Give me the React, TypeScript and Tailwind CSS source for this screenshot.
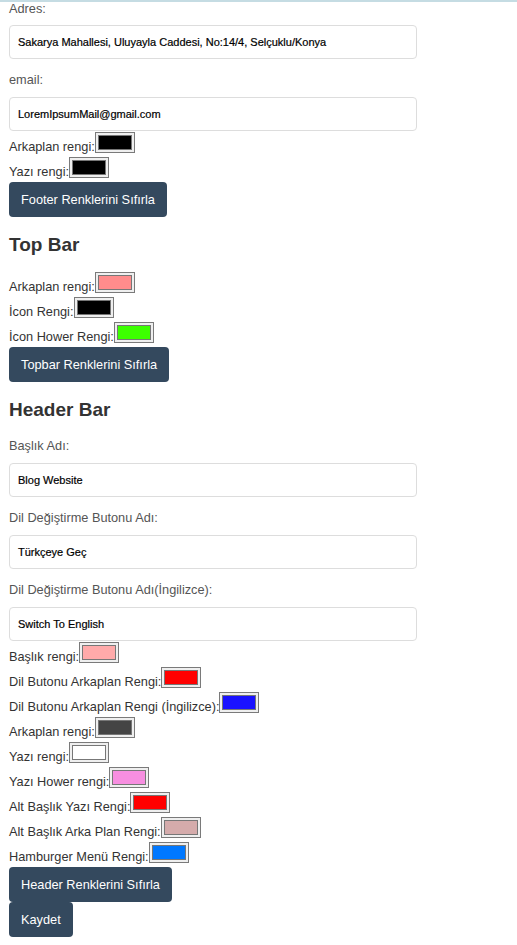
import React from 'react';

type ColorRow = { label: string; color: string };

const footerRows: ColorRow[] = [
  { label: 'Arkaplan rengi:', color: '#000000' },
  { label: 'Yazı rengi:', color: '#000000' },
];

const topBarRows: ColorRow[] = [
  { label: 'Arkaplan rengi:', color: '#ff8c8c' },
  { label: 'İcon Rengi:', color: '#000000' },
  { label: 'İcon Hower Rengi:', color: '#3cff00' },
];

const headerRows: ColorRow[] = [
  { label: 'Başlık rengi:', color: '#ffaaaa' },
  { label: 'Dil Butonu Arkaplan Rengi:', color: '#ff0000' },
  { label: 'Dil Butonu Arkaplan Rengi (İngilizce):', color: '#1a12ff' },
  { label: 'Arkaplan rengi:', color: '#444444' },
  { label: 'Yazı rengi:', color: '#ffffff' },
  { label: 'Yazı Hower rengi:', color: '#f78ee0' },
  { label: 'Alt Başlık Yazı Rengi:', color: '#ff0000' },
  { label: 'Alt Başlık Arka Plan Rengi:', color: '#d5abab' },
  { label: 'Hamburger Menü Rengi:', color: '#0078ff' },
];

const Field = ({ label, value, last, first }: { label: string; value: string; last?: boolean; first?: boolean }) => (
  <div className={last ? '' : 'mb-[12px]'}>
    <label className={`block text-[12.75px] text-[#555] mb-[8px] ${first ? 'leading-[17px]' : 'leading-[18px]'}`}>
      {label}
    </label>
    <div className="w-[408px] h-[34px] border border-[#dddddd] rounded-[4px] px-[8px] flex items-center text-[11px] text-black [-webkit-text-stroke:0.2px_#000]">
      {value}
    </div>
  </div>
);

const Swatch = ({ color }: { color: string }) => (
  <span className="self-start mt-[1px] w-[40px] h-[21px] border border-[#7a7a7a] bg-[#efefef] px-[2px] py-[2px] flex">
    <span className="flex-1 border border-[#777777]" style={{ backgroundColor: color }} />
  </span>
);

const Rows = ({ rows }: { rows: ColorRow[] }) => (
  <div>
    {rows.map((r, i) => (
      <div key={i} className="flex items-end h-[25px]">
        <span className="text-[12.75px] leading-[18px] text-[#333]">{r.label}</span>
        <Swatch color={r.color} />
      </div>
    ))}
  </div>
);

const Btn = ({ children, className = '' }: { children: React.ReactNode; className?: string }) => (
  <div className={`w-fit h-[35px] px-[12px] rounded-[4px] bg-[#34495e] text-white text-[12.75px] flex items-center ${className}`}>
    {children}
  </div>
);

const Heading = ({ children, className = 'mb-[16px]' }: { children: React.ReactNode; className?: string }) => (
  <h3 className={`mt-[18px] text-[19px] leading-[20px] font-bold text-[#333] ${className}`}>{children}</h3>
);

export default function App() {
  return (
    <div
      className="relative w-[517px] h-[945px] bg-white overflow-hidden"
      style={{ fontFamily: '"Liberation Sans", Arial, sans-serif' }}
    >
      <div className="absolute top-0 left-0 right-0 h-[2px] bg-[#c5dce3]" />
      <div className="pl-[9px]">
        <Field first label="Adres:" value="Sakarya Mahallesi, Uluyayla Caddesi, No:14/4, Selçuklu/Konya" />
        <Field last label="email:" value="LoremIpsumMail@gmail.com" />
        <Rows rows={footerRows} />
        <Btn className="mt-[1px]">Footer Renklerini Sıfırla</Btn>

        <Heading>Top Bar</Heading>
        <Rows rows={topBarRows} />
        <Btn className="mt-[1px]">Topbar Renklerini Sıfırla</Btn>

        <Heading className="mb-[17px]">Header Bar</Heading>
        <Field label="Başlık Adı:" value="Blog Website" />
        <Field label="Dil Değiştirme Butonu Adı:" value="Türkçeye Geç" />
        <Field last label="Dil Değiştirme Butonu Adı(İngilizce):" value="Switch To English" />
        <Rows rows={headerRows} />
        <Btn className="mt-[1px]">Header Renklerini Sıfırla</Btn>
        <Btn>Kaydet</Btn>
      </div>
    </div>
  );
}
